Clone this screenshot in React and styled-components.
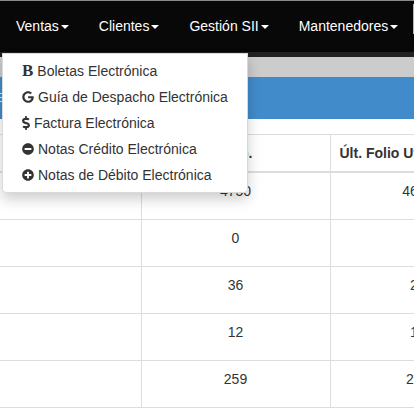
import React from "react";
import styled, { createGlobalStyle } from "styled-components";
import { FaGoogle, FaDollarSign, FaMinusCircle, FaPlusCircle } from "react-icons/fa";

const GlobalStyle = createGlobalStyle`
  html, body {
    margin: 0;
    height: 420px;
    overflow: hidden;
    background: #fff;
    font-family: "Liberation Sans", Arial, sans-serif;
    font-size: 14px;
    line-height: 20px;
    color: #333;
  }
`;

const Page = styled.div`
  position: relative;
  width: 414px;
  height: 420px;
  overflow: hidden;
  border-top: 1px solid #8a8a8a;
  box-sizing: border-box;
`;

const Navbar = styled.nav`
  position: relative;
  display: flex;
  height: 51px;
  padding-left: 1px;
  background: #080808;
  border-bottom: 5px solid #222;
  white-space: nowrap;
`;

const NavItem = styled.a`
  padding: 15px;
  color: #fff;
  flex: none;
`;

const Caret = styled.span`
  display: inline-block;
  width: 0;
  height: 0;
  margin-left: 2px;
  vertical-align: middle;
  border-top: 4px solid #fff;
  border-left: 4px solid transparent;
  border-right: 4px solid transparent;
`;

// sliver of the next nav control, cut off by the right edge
const NextControl = styled.span`
  position: absolute;
  top: 3px;
  right: 0;
  width: 1px;
  height: 30px;
  background: #b5b5b5;
`;

const GreyBand = styled.div`
  height: 20px;
  background: #ccc;
`;

const BlueBand = styled.div`
  display: flex;
  flex-direction: column;
  gap: 3px;
  height: 42px;
  box-sizing: border-box;
  padding-top: 16px;
  background: #428bca;
`;

const BurgerBar = styled.span`
  display: block;
  width: 2px;
  height: 1px;
  background: #dbe8f4;
`;

const TableWrap = styled.div`
  margin-top: 15px;
  width: 505px;
`;

const Table = styled.table`
  width: 505px;
  table-layout: fixed;
  border-collapse: collapse;
  border-top: 1px solid #ddd;
`;

const Th = styled.th`
  width: ${props => props.w}px;
  height: 36px;
  padding: 8px 9px;
  box-sizing: border-box;
  text-align: left;
  font-weight: bold;
  white-space: nowrap;
  overflow: hidden;
  border-left: 1px solid #ddd;
  border-bottom: 2px solid #ddd;
  &:first-child { border-left: 0; }
`;

const Td = styled.td`
  height: 47px;
  padding: 8px;
  box-sizing: border-box;
  text-align: center;
  vertical-align: top;
  border-left: 1px solid #ddd;
  border-bottom: 1px solid #ddd;
  &:first-child { border-left: 0; }
`;

const Menu = styled.ul`
  position: absolute;
  top: 52px;
  left: 2px;
  width: 246px;
  height: 140px;
  box-sizing: border-box;
  margin: 0;
  padding: 5px 0;
  list-style: none;
  background: #fff;
  border-radius: 0 0 4px 4px;
  box-shadow: 0 6px 14px rgba(0, 0, 0, 0.2);
  outline: 1px solid rgba(0, 0, 0, 0.15);
  outline-offset: -1px;
`;

const MenuItem = styled.li`
  display: flex;
  align-items: center;
  height: 26px;
  padding-left: 20px;
  white-space: nowrap;
  color: #333;
`;

const IconSlot = styled.span`
  display: inline-flex;
  align-items: center;
  margin-right: 4px;
  color: #333;
`;

const SerifB = styled.span`
  font-family: "Liberation Serif", serif;
  font-weight: bold;
  font-size: 17px;
  color: #333;
  margin-right: 4px;
`;

const DollarIcon = styled(FaDollarSign)`
  width: 8px;
  height: 14px;
`;

const navLinks = ["Ventas", "Clientes", "Gestión SII", "Mantenedores"];

const rows = [
  ["", "4750", "4680"],
  ["", "0", "0"],
  ["", "36", "26"],
  ["", "12", "12"],
  ["", "259", "259"],
];

export default function App() {
  return (
    <Page>
      <GlobalStyle />
      <Navbar>
        {navLinks.map(label => (
          <NavItem key={label}>
            {label}
            <Caret />
          </NavItem>
        ))}
        <NextControl />
      </Navbar>
      <GreyBand />
      <BlueBand>
        <BurgerBar />
        <BurgerBar />
        <BurgerBar />
      </BlueBand>
      <TableWrap>
        <Table>
          <thead>
            <tr>
              <Th w={141}>Tipo Documento</Th>
              <Th w={189}>Cant. Fol. Disp.</Th>
              <Th w={175}>Últ. Folio Utilizado</Th>
            </tr>
          </thead>
          <tbody>
            {rows.map((row, i) => (
              <tr key={i}>
                {row.map((cell, j) => (
                  <Td key={j}>{cell}</Td>
                ))}
              </tr>
            ))}
          </tbody>
        </Table>
      </TableWrap>
      <Menu>
        <MenuItem><SerifB>B</SerifB>Boletas Electrónica</MenuItem>
        <MenuItem><IconSlot><FaGoogle size={12} /></IconSlot>Guía de Despacho Electrónica</MenuItem>
        <MenuItem><IconSlot><DollarIcon /></IconSlot>Factura Electrónica</MenuItem>
        <MenuItem><IconSlot><FaMinusCircle size={12} /></IconSlot>Notas Crédito Electrónica</MenuItem>
        <MenuItem><IconSlot><FaPlusCircle size={12} /></IconSlot>Notas de Débito Electrónica</MenuItem>
      </Menu>
    </Page>
  );
}
